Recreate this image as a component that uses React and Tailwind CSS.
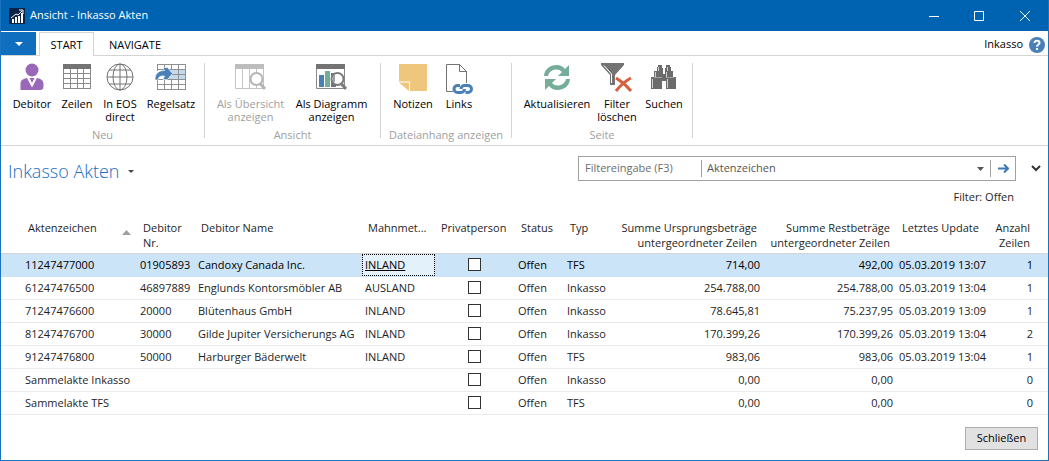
import React, { useState } from "react";

const PersonIcon = () => (
  <svg width="28" height="28" viewBox="0 0 28 28" fill="#9968b8">
    <ellipse cx="14" cy="7" rx="6.500" ry="6.500" />
    <path d="M2.500 27V21c0-3.500 2-5 6.500-6l5 9.500L19 15c4.500 1 6.500 2.500 6.500 6v2.500c0 2.500-1 3.500-3.500 3.500z" />
    <path d="M11.500 15h5L14 20z" />
  </svg>
);

const TableIcon = () => (
  <svg width="28" height="28" viewBox="0 0 28 28" fill="none" shapeRendering="crispEdges">
    <rect x="0" y="1" width="28" height="5" fill="#737373" />
    <path
      d="M.5 6v19.500h27V6M7.500 6v19M14.500 6v19M20.500 6v19M1 10.500h26M1 15.500h26M1 20.500h26"
      stroke="#8a8a8a"
    />
  </svg>
);

const GlobeIcon = () => (
  <svg width="28" height="28" viewBox="0 0 28 28" fill="none" stroke="#737373">
    <circle cx="14" cy="14" r="13" />
    <ellipse cx="14" cy="14" rx="7" ry="13" />
    <path d="M14 1v26M1 14h26M3 7h22M3 21h22" />
  </svg>
);

const RuleIcon = () => (
  <svg width="32" height="28" viewBox="0 0 32 28" fill="none">
    <rect x="12" y="6" width="19" height="10" fill="#c3d9ee" />
    <path
      d="M2.500 8V1.500h28v25h-28V17M9.500 1v7M16.500 1v5M23.500 1v25M9.500 17v9M16.500 16v10M3 6.500h28M17 11.500h14M3 16.500h28M3 21.500h28"
      stroke="#8f8f8f"
      shapeRendering="crispEdges"
    />
    <path
      d="M0 17C0 10 4 7.500 9.500 7.500L8 4.500h4.500l5 6-5 6H8l1.500-3.500C5 12.500 3.500 14 3 17z"
      fill="#4a80b8"
      stroke="#fff"
      strokeWidth=".6"
    />
  </svg>
);

const ListViewIcon = () => (
  <svg width="31" height="28" viewBox="0 0 31 28" fill="none">
    <path d="M0 1h29v5H0z" fill="#bdbdbd" />
    <path d="M.5 6v19.500h28V6M7.500 6v19M14.500 6v19M21.500 6v19" stroke="#c4c4c4" />
    <circle cx="21.500" cy="16" r="6" fill="#fff" stroke="#b5b5b5" strokeWidth="2" />
    <path d="M25.500 21l4.500 5" stroke="#b5b5b5" strokeWidth="3" />
  </svg>
);

const ChartViewIcon = () => (
  <svg width="31" height="28" viewBox="0 0 31 28" fill="none">
    <path d="M0 1h29v5H0z" fill="#737373" />
    <path d="M.5 6v19.500h28V6" stroke="#8a8a8a" />
    <path d="M3 12h5v12H3z" fill="#4a80b8" />
    <path d="M9 8h5v16H9z" fill="#76ad98" />
    <path d="M15 10h5v14h-5z" fill="#737373" />
    <circle cx="21.500" cy="16" r="6" fill="#fff" stroke="#7b7b7b" strokeWidth="2" />
    <path d="M17 13v6h2v-8z" fill="#a0a0a0" />
    <path d="M25.500 21l4.500 5" stroke="#7b7b7b" strokeWidth="3" />
  </svg>
);

const NoteIcon = () => (
  <svg width="28" height="28" viewBox="0 0 28 28" fill="#efc77c">
    <path d="M0 1h28v27H11V18.500H0z" />
    <path d="M0 19.500h10V28z" />
  </svg>
);

const LinkIcon = () => (
  <svg width="28" height="31" viewBox="0 0 28 31" fill="none">
    <path d="M8 28.500H1.500V1.500h13l7 7V20M14.500 1.500v7h7z" stroke="#737373" />
    <path
      d="M15 22.500h-2.500a3.500 3.500 0 000 7H16c2 0 3.500-1.500 3.500-3.500M20.500 29.500h2.500a3.500 3.500 0 000-7h-3.500c-2 0-3.500 1.500-3.500 3.500"
      stroke="#4a80b8"
      strokeWidth="3"
    />
  </svg>
);

const RefreshIcon = () => (
  <svg width="28" height="28" viewBox="0 0 28 28" fill="#76ad98">
    <path d="M1 13C1.500 6 7 2 13.500 2c3.500 0 6.500 1.500 8.500 4l4-4v11H15l4-4c-1.500-1.700-3.500-2.500-5.500-2.500C9 6.500 6 9 5 13z" />
    <path d="M27 16c-.5 7-6 11-12.500 11-3.500 0-6.500-1.500-8.500-4l-4 4V16h11l-4 4c1.500 1.700 3.500 2.500 5.500 2.500 4.500 0 7.500-2.500 8.500-6.500z" />
  </svg>
);

const ClearFilterIcon = () => (
  <svg width="32" height="30" viewBox="0 0 32 30" fill="none">
    <path d="M0 0h23v2L14 12v10H9V12L0 2z" fill="#737373" />
    <path d="M3 2.500l7.500 8.500v9" stroke="#fff" />
    <path d="M15 15c5 3 10 7 15 13M30 15c-6 3-11 8-15 13" stroke="#d9603f" strokeWidth="3" />
  </svg>
);

const BinocularsIcon = () => (
  <svg width="28" height="28" viewBox="0 0 28 28" shapeRendering="crispEdges">
    <path
      d="M7 4h1V2h4v3h1v6h2V5h1V2h4v2h1v4h2v6h3v12H16v-8h-4v8H1V14h3V8h3z"
      fill="#6b6b6b"
    />
    <path d="M8.500 4v4M5.500 9v5M2.500 16v9M17.500 4v4M16.500 9v5M17.500 16v9" stroke="#d0d0d0" />
    <path d="M4 14.500h8M16 14.500h8" stroke="#a0a0a0" />
  </svg>
);

const ribbonGroups = [
  {
    title: "Neu",
    className: "pl-2 pr-[3px]",
    items: [
      { lines: ["Debitor"], icon: <PersonIcon />, width: "w-[46px]" },
      { lines: ["Zeilen"], icon: <TableIcon />, width: "w-11" },
      { lines: ["In EOS", "direct"], icon: <GlobeIcon />, width: "w-[42px]" },
      { lines: ["Regelsatz"], icon: <RuleIcon />, width: "w-[60px]" },
    ],
  },
  {
    title: "Ansicht",
    className: "pl-[5px] pr-2",
    items: [
      { lines: ["Als Übersicht", "anzeigen"], icon: <ListViewIcon />, width: "w-[81px]", disabled: true },
      { lines: ["Als Diagramm", "anzeigen"], icon: <ChartViewIcon />, width: "w-[81px]" },
    ],
  },
  {
    title: "Dateianhang anzeigen",
    className: "pl-[7px] pr-[31px]",
    items: [
      { lines: ["Notizen"], icon: <NoteIcon />, width: "w-[50px]" },
      { lines: ["Links"], icon: <LinkIcon />, width: "w-[42px]" },
    ],
  },
  {
    title: "Seite",
    className: "pl-[7px] pr-[3px]",
    items: [
      { lines: ["Aktualisieren"], icon: <RefreshIcon />, width: "w-[76px]" },
      { lines: ["Filter", "löschen"], icon: <ClearFilterIcon />, width: "w-11" },
      { lines: ["Suchen"], icon: <BinocularsIcon />, width: "w-[50px]" },
    ],
  },
];

const columns = [
  { lines: ["Aktenzeichen"], width: "w-[136px]", sorted: true },
  { lines: ["Debitor", "Nr."], width: "w-[58px]" },
  { lines: ["Debitor Name"], width: "" },
  { lines: ["Mahnmet..."], width: "w-[73px]" },
  { lines: ["Privatperson"], width: "w-20" },
  { lines: ["Status"], width: "w-[49px]" },
  { lines: ["Typ"], width: "w-12" },
  { lines: ["Summe Ursprungsbeträge", "untergeordneter Zeilen"], width: "w-[151px]", right: true },
  { lines: ["Summe Restbeträge", "untergeordneter Zeilen"], width: "w-[133px]", right: true },
  { lines: ["Letztes Update"], width: "w-[92px]" },
  { lines: ["Anzahl", "Zeilen"], width: "w-[60px]", right: true, last: true },
];

const rows = [
  { id: "11247477000", nr: "01905893", name: "Candoxy Canada Inc.", method: "INLAND", type: "TFS", total: "714,00", rest: "492,00", updated: "05.03.2019 13:07", count: 1 },
  { id: "61247476500", nr: "46897889", name: "Englunds Kontorsmöbler AB", method: "AUSLAND", type: "Inkasso", total: "254.788,00", rest: "254.788,00", updated: "05.03.2019 13:04", count: 1 },
  { id: "71247476600", nr: "20000", name: "Blütenhaus GmbH", method: "INLAND", type: "Inkasso", total: "78.645,81", rest: "75.237,95", updated: "05.03.2019 13:09", count: 1 },
  { id: "81247476700", nr: "30000", name: "Gilde Jupiter Versicherungs AG", method: "INLAND", type: "Inkasso", total: "170.399,26", rest: "170.399,26", updated: "05.03.2019 13:04", count: 2 },
  { id: "91247476800", nr: "50000", name: "Harburger Bäderwelt", method: "INLAND", type: "TFS", total: "983,06", rest: "983,06", updated: "05.03.2019 13:04", count: 1 },
  { id: "Sammelakte Inkasso", type: "Inkasso", total: "0,00", rest: "0,00", count: 0 },
  { id: "Sammelakte TFS", type: "TFS", total: "0,00", rest: "0,00", count: 0 },
];

const TitleBar = () => (
  <header className="flex h-[31px] items-center bg-[#0063b1] pl-2 text-white">
    <svg width="16" height="16" viewBox="0 0 16 16" fill="none">
      <path d="M0 0h16v16H0z" fill="#0b2347" />
      <path d="M3 11h2v4H3zM6 9h2v6H6zM9 8h2v7H9zM12 5h2v10h-2z" fill="#fff" />
      <path d="M2 10l5-4 2 1 4-4M10 2h4v4" stroke="#fff" />
    </svg>
    <h1 className="ml-[5px] text-[11px]">Ansicht - Inkasso Akten</h1>
    <div className="ml-auto flex h-full">
      <button aria-label="Minimieren" className="flex w-[45px] items-center justify-center">
        <svg width="10" height="10" viewBox="0 0 10 10" stroke="#fff">
          <path d="M0 5.500h10" />
        </svg>
      </button>
      <button aria-label="Maximieren" className="flex w-[45px] items-center justify-center">
        <svg width="10" height="10" viewBox="0 0 10 10" stroke="#fff" fill="none">
          <path d="M.5.5h9v9h-9z" />
        </svg>
      </button>
      <button aria-label="Fenster schließen" className="flex w-[47px] items-center justify-center">
        <svg width="10" height="10" viewBox="0 0 10 10" stroke="#fff">
          <path d="M0 0l10 10M10 0L0 10" />
        </svg>
      </button>
    </div>
  </header>
);

const TabBar = () => (
  <nav className="flex h-[25px] border-b border-[#d4d4d4] pt-px text-[11px] text-black">
    <button aria-label="Menü" className="flex w-[35px] items-center justify-center bg-[#106ebe]">
      <svg width="8" height="4" viewBox="0 0 8 4" fill="#fff">
        <path d="M0 0h8L4 4z" />
      </svg>
    </button>
    <button className="-mb-px ml-[3px] w-[55px] border border-b-0 border-[#d4d4d4] bg-white pt-[2px]">
      START
    </button>
    <button className="ml-[7px] px-2 pt-[3px]">NAVIGATE</button>
    <div className="ml-auto flex items-center gap-[6px] pr-[3px] pt-[2px]">
      <span>Inkasso</span>
      <button aria-label="Hilfe">
        <svg width="16" height="16" viewBox="0 0 16 16" fill="none">
          <circle cx="8" cy="8" r="8" fill="#4a80b8" />
          <path
            d="M5.500 6C5.500 4.500 6.500 3.800 8 3.800s2.500.8 2.500 2.100C10.500 7.500 8 7.700 8 9.800"
            stroke="#fff"
            strokeWidth="2"
          />
          <path d="M7 11h2v2H7z" fill="#fff" />
        </svg>
      </button>
    </div>
  </nav>
);

const Ribbon = () => (
  <section className="flex h-[90px] border-b border-[#d4d4d4] pb-1 pt-[7px]">
    {ribbonGroups.map((group) => (
      <div key={group.title} className="flex shrink-0">
        <div className="flex flex-col">
          <div className={`flex flex-1 ${group.className}`}>
            {group.items.map((item) => (
              <button
                key={item.lines[0]}
                disabled={item.disabled}
                className={`flex flex-col items-center text-[11px] leading-[13px] text-black disabled:text-[#a0a0a0] ${item.width}`}
              >
                <span className="flex h-[34px] items-start">{item.icon}</span>
                {item.lines.map((line) => (
                  <span key={line} className="whitespace-nowrap">
                    {line}
                  </span>
                ))}
              </button>
            ))}
          </div>
          <div className="text-center text-[11px] leading-[13px] text-[#a0a0a0]">
            <span className="whitespace-nowrap">{group.title}</span>
          </div>
        </div>
        <div className="h-[75px] w-px bg-[#d4d4d4]" />
      </div>
    ))}
  </section>
);

const FilterBar = () => (
  <div className="flex items-center gap-[15px]">
    <form
      className="flex h-[25px] w-[438px] items-center border border-[#a0a0a0] text-[11px] text-[#555]"
      onSubmit={(e) => e.preventDefault()}
    >
      <input
        type="text"
        aria-label="Filtereingabe"
        placeholder="Filtereingabe (F3)"
        className="w-[122px] pl-[6px] outline-none placeholder:text-[#6d6d6d]"
      />
      <div className="relative flex h-[17px] flex-1 items-center border-x border-[#a0a0a0]">
        <select aria-label="Filterspalte" className="w-full appearance-none pl-[5px] outline-none">
          <option>Aktenzeichen</option>
          <option>Debitor Name</option>
          <option>Status</option>
        </select>
        <svg
          className="pointer-events-none absolute right-[6px]"
          width="7"
          height="4"
          viewBox="0 0 7 4"
          fill="#555"
        >
          <path d="M0 0h7L3.500 4z" />
        </svg>
      </div>
      <button aria-label="Filter anwenden" className="flex w-6 justify-center">
        <svg width="11" height="9" viewBox="0 0 11 9" fill="none" stroke="#3e78b5" strokeWidth="2">
          <path d="M0 4.500h10M6 .5l4 4-4 4" />
        </svg>
      </button>
    </form>
    <button aria-label="Filter erweitern">
      <svg width="10" height="7" viewBox="0 0 10 7" fill="none" stroke="#333" strokeWidth="2">
        <path d="M1 1l4 4 4-4" />
      </svg>
    </button>
  </div>
);

const CaseTable = () => {
  const [selected, setSelected] = useState(0);

  return (
    <table className="w-full table-fixed border-collapse text-[11px] leading-[15px] text-[#1e1e1e]">
      <thead>
        <tr className="h-[36px] border-b border-[#d4d4d4] align-top">
          {columns.map((col, i) => (
            <th
              key={i}
              scope="col"
              className={`whitespace-nowrap p-0 pt-[3px] font-normal ${col.width} ${
                col.right ? "text-right" : "text-left"
              } ${i === 0 ? "pl-[27px]" : "pl-[6px]"} ${col.last ? "pr-[18px]" : "pr-[6px]"}`}
            >
              <span className="flex items-start justify-between">
                <span className="flex-1">
                  {col.lines.map((line) => (
                    <span key={line} className={`flex ${col.right ? "justify-end" : ""}`}>
                      {line}
                    </span>
                  ))}
                </span>
                {col.sorted && (
                  <svg className="mt-[10px]" width="9" height="5" viewBox="0 0 9 5" fill="#a0a0a0">
                    <path d="M0 5h9L4.500 0z" />
                  </svg>
                )}
              </span>
            </th>
          ))}
        </tr>
      </thead>
      <tbody>
        {rows.map((row, i) => (
          <tr
            key={row.id}
            onClick={() => setSelected(i)}
            className={`h-[23px] whitespace-nowrap border-b ${
              i === selected ? "border-[#cce4f7] bg-[#cce4f7] text-black" : "border-[#ebebeb]"
            }`}
          >
            <td className="p-0 pl-6">{row.id}</td>
            <td className="p-0 pl-[3px]">{row.nr}</td>
            <td className="p-0 pl-[3px]">{row.name}</td>
            <td className="p-0">
              {i === selected ? (
                <a
                  href="#"
                  className="flex h-[22px] items-center border border-dotted border-black bg-[#e3f1fb] pl-[2px] underline"
                >
                  {row.method}
                </a>
              ) : (
                <span className="pl-[3px]">{row.method}</span>
              )}
            </td>
            <td className="p-0 pr-[2px]">
              <input
                type="checkbox"
                aria-label={`Privatperson ${row.id}`}
                className="mx-auto block size-[13px] appearance-none border border-[#333] bg-white checked:bg-[#333]"
              />
            </td>
            <td className="p-0 pl-[3px]">Offen</td>
            <td className="p-0 pl-[3px]">{row.type}</td>
            <td className="p-0 pr-[3px] text-right">{row.total}</td>
            <td className="p-0 pr-[3px] text-right">{row.rest}</td>
            <td className="p-0 pl-[3px]">{row.updated}</td>
            <td className="p-0 pr-[15px] text-right">{row.count}</td>
          </tr>
        ))}
      </tbody>
    </table>
  );
};

export default function App() {
  return (
    <div className="border border-t-0 border-[#1a73bd] bg-white font-['Open_Sans','Noto_Sans',sans-serif]">
      <TitleBar />
      <TabBar />
      <Ribbon />
      <main>
        <div className="flex items-start justify-between pl-[7px] pr-[7px] pt-[10px]">
          <button className="flex items-center gap-[9px] text-[#1b6ec2]">
            <h2 className="text-[18px] font-light leading-[30px]">Inkasso Akten</h2>
            <svg width="6" height="3" viewBox="0 0 6 3" fill="#444">
              <path d="M0 0h6L3 3z" />
            </svg>
          </button>
          <FilterBar />
        </div>
        <p className="pr-[34px] pt-[3px] text-right text-[11px] leading-[15px] text-[#1e1e1e]">
          Filter: Offen
        </p>
        <div className="pt-[13px]">
          <CaseTable />
        </div>
      </main>
      <footer className="flex justify-end pb-[10px] pr-[10px] pt-3">
        <button className="h-[23px] w-[73px] border border-[#adadad] bg-[#e1e1e1] text-[11px] text-black">
          Schließen
        </button>
      </footer>
    </div>
  );
}
